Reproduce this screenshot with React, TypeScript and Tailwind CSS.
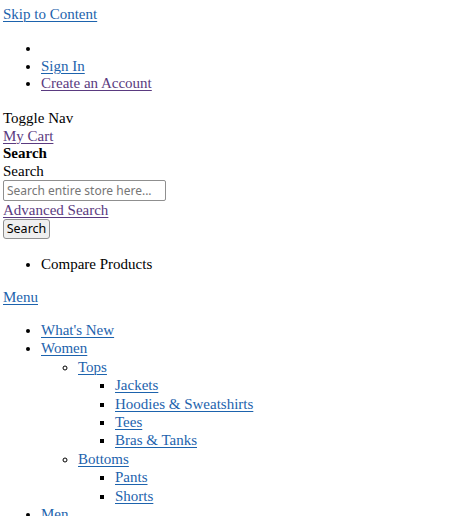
import React from "react";

const link = "text-[#1d63ad] underline underline-offset-[2px] decoration-[1px]";
const visited = "text-[#5a3a80] underline underline-offset-[2px] decoration-[1px]";

export default function App() {
  return (
    <div className="bg-white min-h-[516px] pl-[3px] text-black text-[15px] leading-[18.4px] [font-family:'Liberation_Serif','Times_New_Roman',serif]">
      <div className="pt-[5px] h-[23.4px]">
        <a href="#" className={link}>Skip to Content</a>
      </div>
      <ul className="mt-[16.6px] pl-[38px] list-disc leading-[17.6px]">
        <li className="h-[17.6px]"></li>
        <li><a href="#" className={link}>Sign In</a></li>
        <li><a href="#" className={visited}>Create an Account</a></li>
      </ul>
      <div className="mt-[17px] leading-[17.8px]">
        <div>Toggle Nav</div>
        <div><a href="#" className={visited}>My Cart</a></div>
        <div className="font-bold">Search</div>
        <div>Search</div>
      </div>
      <input
        type="text"
        placeholder="Search entire store here..."
        className="block mt-[-1px] w-[163px] h-[21px] border border-[#8f8f8f] rounded-[2px] px-[3px] text-[12px] placeholder:text-[#767676] [font-family:'Noto_Sans','Open_Sans',sans-serif] outline-none"
      />
      <div className="h-[18.4px]">
        <a href="#" className={visited}>Advanced Search</a>
      </div>
      <button className="block mt-[-0.2px] h-[20px] w-[47px] border border-[#8f8f8f] rounded-[3px] bg-[#efefef] text-[12.5px] leading-[16px] [font-family:'Noto_Sans','Open_Sans',sans-serif]">
        Search
      </button>
      <ul className="mt-[15.8px] pl-[38px] list-disc">
        <li>Compare Products</li>
      </ul>
      <div className="mt-[15px]">
        <a href="#" className={link}>Menu</a>
      </div>
      <ul className="mt-[14.2px] pl-[38px] list-disc">
        <li><a href="#" className={link}>What's New</a></li>
        <li>
          <a href="#" className={link}>Women</a>
          <ul className="pl-[37px] list-[circle]">
            <li>
              <a href="#" className={link}>Tops</a>
              <ul className="pl-[37px] list-[square]">
                <li><a href="#" className={link}>Jackets</a></li>
                <li><a href="#" className={link}>Hoodies &amp; Sweatshirts</a></li>
                <li><a href="#" className={link}>Tees</a></li>
                <li><a href="#" className={link}>Bras &amp; Tanks</a></li>
              </ul>
            </li>
            <li>
              <a href="#" className={link}>Bottoms</a>
              <ul className="pl-[37px] list-[square]">
                <li><a href="#" className={link}>Pants</a></li>
                <li><a href="#" className={link}>Shorts</a></li>
              </ul>
            </li>
          </ul>
        </li>
        <li><a href="#" className={link}>Men</a></li>
      </ul>
    </div>
  );
}
